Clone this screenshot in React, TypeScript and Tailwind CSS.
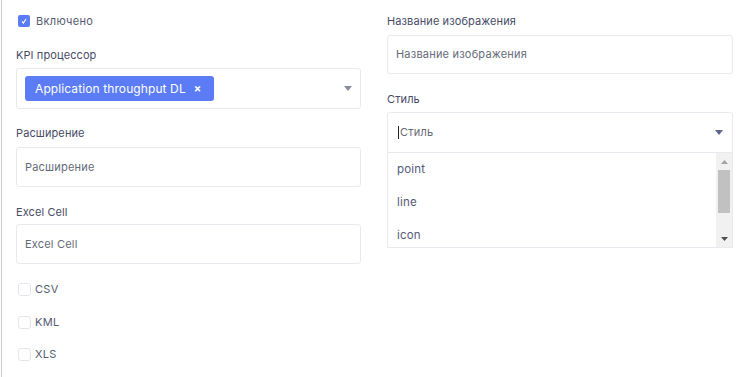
import { useState } from "react";

function Check({ label, checked }: { label: string; checked?: boolean }) {
  return (
    <div className="flex items-center h-[14px] pl-[2px] gap-[4px]">
      {checked ? (
        <span className="w-[12px] h-[12px] mr-[2px] rounded-[2px] bg-[#5b7cf5] flex items-center justify-center">
          <svg width="8" height="8" viewBox="0 0 8 8">
            <path d="M2 4.5 L3.4 6 L6 2" stroke="white" strokeWidth="1.1" fill="none" />
          </svg>
        </span>
      ) : (
        <span className="w-[13px] h-[13px] rounded-[3px] border border-[#e4e5ec] bg-white" />
      )}
      <span className="text-[11px] text-[#555a70] tracking-[0.3px]">{label}</span>
    </div>
  );
}

function Label({ text, className }: { text: string; className: string }) {
  return (
    <div className={"h-[14px] leading-[14px] text-[11px] tracking-[0.1px] text-[#474b66] " + className}>
      {text}
    </div>
  );
}

function TextBox({ text, className }: { text: string; className: string }) {
  return (
    <div
      className={
        "border border-[#e9eaf0] rounded-[3px] flex items-center px-[8px] text-[11px] tracking-[0.2px] text-[#666a78] " +
        className
      }
    >
      {text}
    </div>
  );
}

function Caret({ color }: { color: string }) {
  return (
    <svg width="8" height="5" viewBox="0 0 8 5">
      <path d="M0 0 H8 L4 5 Z" fill={color} />
    </svg>
  );
}

export default function App() {
  const [items] = useState(["point", "line", "icon"]);
  return (
    <div
      className="w-[746px] h-[377px] bg-white ml-px border-l border-[#c9c9c9] flex gap-[26px] pl-[14px]"
      style={{ fontFamily: "Inter, 'Noto Sans', sans-serif" }}
    >
      <div className="w-[345px] flex flex-col pt-[14px]">
        <Check label="Включено" checked />
        <Label text="KPI процессор" className="mt-[20px]" />
        <div className="mt-[6px] h-[41px] border border-[#e9eaf0] rounded-[3px] flex items-center pl-[8px] pr-[8px] justify-between">
          <div className="h-[25px] w-[189px] bg-[#5b7cf5] rounded-[3px] flex items-center pl-[10px] text-white text-[12px] tracking-[0.1px]">
            <span>Application throughput DL</span>
            <span className="ml-[8px] text-[11px] font-bold">×</span>
          </div>
          <Caret color="#8a8d99" />
        </div>
        <Label text="Расширение" className="mt-[17px]" />
        <TextBox text="Расширение" className="mt-[7px] h-[40px]" />
        <Label text="Excel Cell" className="mt-[18px]" />
        <TextBox text="Excel Cell" className="mt-[5px] h-[40px]" />
        <div className="mt-[18px]">
          <Check label="CSV" />
        </div>
        <div className="mt-[19px]">
          <Check label="KML" />
        </div>
        <div className="mt-[18px]">
          <Check label="XLS" />
        </div>
      </div>

      <div className="w-[346px] flex flex-col pt-[14px]">
        <Label text="Название изображения" className="" />
        <TextBox text="Название изображения" className="mt-[7px] h-[39px]" />
        <Label text="Стиль" className="mt-[18px]" />
        <div className="mt-[6px] h-[41px] border border-[#e9eaf0] rounded-t-[3px] flex items-center pl-[10px] pr-[9px] justify-between">
          <div className="flex items-center text-[11px] tracking-[0.2px] text-[#666a78]">
            <span className="w-px h-[13px] bg-[#222] mr-px" />
            Стиль
          </div>
          <Caret color="#5d6487" />
        </div>
        <div className="h-[95px] border border-t-0 border-[#e9eaf0] flex overflow-hidden">
          <div className="flex-1 flex flex-col">
            {items.map((it) => (
              <div key={it} className="h-[33px] shrink-0 flex items-center pl-[9px] text-[11.5px] tracking-[0.2px] text-[#555a7a]">
                {it}
              </div>
            ))}
          </div>
          <div className="w-[16px] bg-[#f1f1f1] flex flex-col items-center">
            <div className="h-[17px] flex items-center">
              <svg width="7" height="4" viewBox="0 0 7 4">
                <path d="M0 4 H7 L3.5 0 Z" fill="#a3a3a3" />
              </svg>
            </div>
            <div className="w-[12px] h-[43px] bg-[#c1c1c1]" />
            <div className="flex-1" />
            <div className="h-[17px] flex items-center">
              <svg width="7" height="4" viewBox="0 0 7 4">
                <path d="M0 0 H7 L3.5 4 Z" fill="#505050" />
              </svg>
            </div>
          </div>
        </div>
      </div>
    </div>
  );
}
